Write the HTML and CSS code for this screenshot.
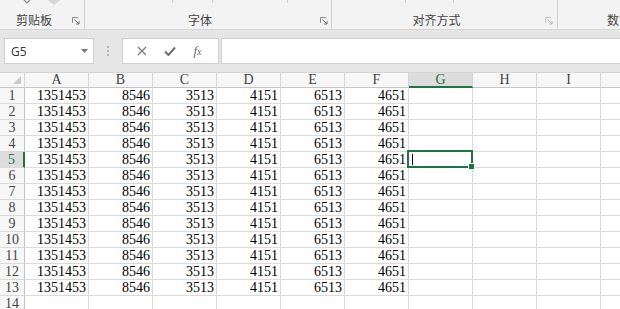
FILE: index.html
```html
<!DOCTYPE html>
<html lang="zh-CN">
<head>
<meta charset="utf-8">
<title>Sheet</title>
<link rel="stylesheet" href="styles.css">
</head>
<body>
<div class="app">
  <div class="ribbon">
    <div class="group g-clip">
      <div class="remnants">
        <svg class="chev" width="8" height="5" viewBox="0 0 8 5"><path d="M1 0 L4 3 L7 0" fill="none" stroke="#8a8a8a" stroke-width="1.2"/></svg>
        <svg class="tri" width="12" height="5" viewBox="0 0 12 5"><path d="M0 0 H12 L6 5 Z" fill="#d6d6d6"/></svg>
      </div>
      <span class="label">剪贴板</span>
      <svg class="launcher" width="8" height="8" viewBox="0 0 8 8"><path d="M0.5 6 V0.5 H6" fill="none" stroke="#8c8c8c"/><path d="M2.5 2.5 L7 7 M4 7 H7 V4" fill="none" stroke="#6a6a6a"/></svg>
    </div>
    <div class="group g-font">
      <div class="ticks"><i class="t1"></i><i class="t2"></i><i class="t3"></i></div>
      <span class="label">字体</span>
      <svg class="launcher" width="8" height="8" viewBox="0 0 8 8"><path d="M0.5 6 V0.5 H6" fill="none" stroke="#8c8c8c"/><path d="M2.5 2.5 L7 7 M4 7 H7 V4" fill="none" stroke="#6a6a6a"/></svg>
    </div>
    <div class="group g-align">
      <div class="ticks"><i class="t4"></i><i class="t5"></i></div>
      <span class="label">对齐方式</span>
      <svg class="launcher" width="8" height="8" viewBox="0 0 8 8"><path d="M0.5 6 V0.5 H6" fill="none" stroke="#c4c4c4"/><path d="M2.5 2.5 L7 7 M4 7 H7 V4" fill="none" stroke="#b8b8b8"/></svg>
    </div>
    <div class="group g-num">
      <span class="label">数字</span>
    </div>
  </div>

  <div class="fbar">
    <div class="namebox">
      <span class="ref">G5</span>
      <svg class="dd" width="7" height="4" viewBox="0 0 7 4"><path d="M0 0 H7 L3.5 4 Z" fill="#7a7a7a"/></svg>
    </div>
    <div class="grip"><i></i><i></i><i></i></div>
    <div class="fbtns">
      <svg class="btn" width="10" height="10" viewBox="0 0 10 10"><path d="M1 1 L9 9 M9 1 L1 9" stroke="#7a7a7a" stroke-width="1.3" fill="none"/></svg>
      <svg class="btn" width="12" height="10" viewBox="0 0 12 10"><path d="M1 5.5 L4.5 9 L11 1.5" stroke="#6f6f6f" stroke-width="2" fill="none"/></svg>
      <span class="fx">f<small>x</small></span>
    </div>
    <div class="finput"></div>
  </div>

  <div class="sheet">
    <div class="hd corner"><svg width="8" height="8" viewBox="0 0 8 8"><path d="M8 0 V8 H0 Z" fill="#c9c9c9"/></svg></div>
    <div class="hd col">A</div>
    <div class="hd col">B</div>
    <div class="hd col">C</div>
    <div class="hd col">D</div>
    <div class="hd col">E</div>
    <div class="hd col">F</div>
    <div class="hd col sel">G</div>
    <div class="hd col">H</div>
    <div class="hd col">I</div>
    <div class="hd col last"></div>
  </div>
</div>
<script src="sheet.js"></script>
</body>
</html>
```

FILE: sheet.js
```js
(function () {
  var sheet = document.querySelector('.sheet');
  var data = ['1351453', '8546', '3513', '4151', '6513', '4651'];
  for (var r = 1; r <= 14; r++) {
    var rh = document.createElement('div');
    rh.className = 'hd row' + (r === 5 ? ' sel' : '');
    rh.textContent = r;
    sheet.appendChild(rh);
    for (var c = 0; c < 10; c++) {
      var cell = document.createElement('div');
      cell.className = 'cell' + (c === 9 ? ' last' : '');
      if (r <= 13 && c < 6) cell.textContent = data[c];
      if (r === 5 && c === 6) {
        cell.className += ' active';
        var caret = document.createElement('span');
        caret.className = 'textcaret';
        cell.appendChild(caret);
      }
      sheet.appendChild(cell);
    }
  }
})();
```

FILE: styles.css
```css
* { box-sizing: border-box; }
html, body { margin: 0; padding: 0; }
body {
  width: 620px;
  height: 309px;
  overflow: hidden;
  background: #ffffff;
  font-family: "Liberation Sans", sans-serif;
}
.app { width: 620px; }

/* Ribbon */
.ribbon {
  display: flex;
  height: 30px;
  background: #f3f3f3;
  border-bottom: 1px solid #d6d6d6;
  overflow: hidden;
}
.group {
  position: relative;
  display: flex;
  align-items: flex-end;
  justify-content: center;
  padding: 0 16px 1px 0;
  border-right: 1px solid #d2d2d2;
  height: 29px;
  flex-shrink: 0;
}
.g-clip { width: 85px; }
.g-font { width: 247px; }
.g-align { width: 226px; }
.g-num {
  flex: 1 1 auto;
  min-width: 0;
  border-right: none;
  justify-content: flex-start;
  padding-left: 49px;
  padding-right: 0;
  overflow: hidden;
}
.label {
  font-family: "Noto Sans CJK SC", "Microsoft YaHei", sans-serif;
  font-size: 12px;
  line-height: 16px;
  color: #444444;
  white-space: nowrap;
}
.launcher {
  position: absolute;
  right: 4px;
  bottom: 4px;
}
.g-font .launcher { right: 3px; }
.remnants .chev { position: absolute; left: 23px; top: 0; }
.remnants .tri { position: absolute; left: 48px; top: 0; }
.ticks i {
  position: absolute;
  top: 0;
  width: 1px;
  height: 3px;
  background: #d0d0d0;
}
.ticks .t1 { left: 87px; }
.ticks .t2 { left: 127px; }
.ticks .t3 { left: 202px; }
.ticks .t4 { left: 73px; }
.ticks .t5 { left: 121px; }

/* Formula bar */
.fbar {
  display: flex;
  align-items: stretch;
  height: 42px;
  padding: 8px 0 8px 4px;
  background: #e6e6e6;
}
.namebox {
  width: 90px;
  background: #ffffff;
  border: 1px solid #cfcfcf;
  display: flex;
  align-items: center;
  justify-content: space-between;
  padding: 0 5px 0 6px;
}
.ref {
  font-family: "Open Sans", "Noto Sans", sans-serif;
  font-size: 12px;
  color: #333333;
}
.grip {
  width: 28px;
  display: flex;
  flex-direction: column;
  align-items: center;
  justify-content: center;
  gap: 2px;
}
.grip i {
  width: 2px;
  height: 2px;
  background: #b4b4b4;
}
.fbtns {
  width: 97px;
  background: #ffffff;
  border: 1px solid #cfcfcf;
  display: flex;
  align-items: center;
  justify-content: space-around;
  padding: 0 8px 0 6px;
}
.fx {
  font-family: "Liberation Serif", serif;
  font-style: italic;
  font-size: 13px;
  color: #6a6a6a;
}
.fx small { font-size: 10px; }
.finput {
  flex: 1;
  margin-left: 2px;
  background: #ffffff;
  border: 1px solid #cfcfcf;
  border-right: none;
}

/* Sheet grid */
.sheet {
  display: grid;
  grid-template-columns: 25px repeat(9, 64px) 1fr;
  grid-auto-rows: 16px;
  background: #ffffff;
}
.hd {
  background: #f7f7f7;
  border-right: 1px solid #d6d6d6;
  border-bottom: 1px solid #c6c6c6;
  font-family: "Liberation Serif", serif;
  font-size: 14px;
  line-height: 15px;
  color: #444444;
  text-align: center;
}
.hd.col { border-top: 1px solid #d6d6d6; line-height: 14px; }
.hd.corner {
  border-top: 1px solid #d6d6d6;
  position: relative;
}
.hd.corner svg { position: absolute; right: 3px; bottom: 3px; }
.hd.row { border-right: 1px solid #c6c6c6; border-bottom: 1px solid #dadada; }
.hd.sel {
  background: #dcdcdc;
  color: #217346;
}
.hd.col.sel { border-bottom: 2px solid #217346; }
.hd.row.sel { border-right: 2px solid #217346; }
.hd.last { border-right: none; }
.cell {
  border-right: 1px solid #dadada;
  border-bottom: 1px solid #dadada;
  font-family: "Liberation Serif", serif;
  font-size: 14px;
  line-height: 15px;
  color: #000000;
  text-align: right;
  padding-right: 2px;
}
.cell.last { border-right: none; }
.cell.active { position: relative; }
.cell.active::before {
  content: "";
  position: absolute;
  left: -2px;
  top: -2px;
  right: -1px;
  bottom: -1px;
  border: 2px solid #217346;
}
.cell.active::after {
  content: "";
  position: absolute;
  right: -3px;
  bottom: -3px;
  width: 5px;
  height: 5px;
  background: #217346;
  border: 1px solid #ffffff;
}
.textcaret {
  position: absolute;
  left: 3px;
  top: 2px;
  width: 1px;
  height: 11px;
  background: #000000;
}
```
